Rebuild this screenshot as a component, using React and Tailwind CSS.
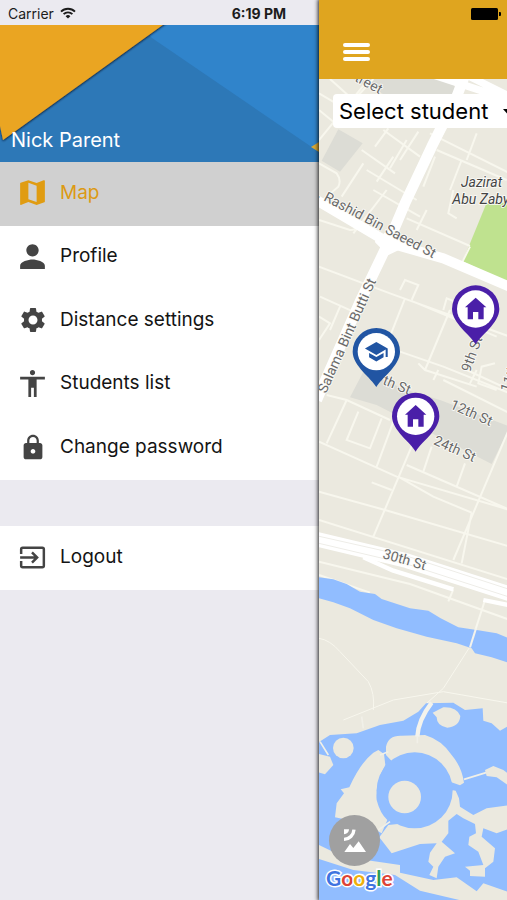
import React from "react";
import {
  IoMdMap,
  IoMdPerson,
  IoMdBody,
  IoMdLock,
  IoMdSchool,
} from "react-icons/io";
import { MdSettings } from "react-icons/md";

function ExitIcon({ size, className }) {
  return (
    <svg
      viewBox="0 0 32 32"
      width={size}
      height={size}
      className={className}
      fill="none"
      stroke="currentColor"
      strokeWidth="2.4"
      aria-hidden="true"
    >
      <path d="M5 12.500V8a1.500 1.500 0 0 1 1.500-1.500h19A1.500 1.500 0 0 1 27 8v16a1.500 1.500 0 0 1-1.500 1.500h-19A1.500 1.500 0 0 1 5 24v-4.500" />
      <path d="M4 16h16M15.500 11l5 5-5 5" />
    </svg>
  );
}

const menuItems = [
  { name: "Map", icon: IoMdMap },
  { name: "Profile", icon: IoMdPerson },
  { name: "Distance settings", icon: MdSettings, iconSize: 30 },
  { name: "Students list", icon: IoMdBody },
  { name: "Change password", icon: IoMdLock, iconSize: 30 },
];

const logo = [
  { letter: "G", color: "text-[#3f74e0]" },
  { letter: "o", color: "text-[#dd4436]" },
  { letter: "o", color: "text-[#eeb00c]" },
  { letter: "g", color: "text-[#3f74e0]" },
  { letter: "l", color: "text-[#2f9e55]" },
  { letter: "e", color: "text-[#dd4436]" },
];

function MenuItem({ item, active }) {
  const Icon = item.icon;
  return (
    <a
      href="#"
      aria-current={active ? "page" : undefined}
      className={`flex h-full items-center gap-[11px] px-4 pb-[2px] text-[19px] ${
        active ? "bg-[#d0d0d0] text-[#dc9a14]" : "bg-white text-[#141414]"
      }`}
    >
      <span className="flex w-[33px] justify-center">
        <Icon size={item.iconSize || 33} className={active ? "text-[#e09c12]" : "text-[#444444]"} />
      </span>
      <span>{item.name}</span>
    </a>
  );
}

function WifiIcon() {
  return (
    <svg viewBox="0 0 16 12" className="h-3 w-4" aria-hidden="true">
      <g fill="none" stroke="#1c1c1c" strokeWidth="1.9">
        <path d="M1 4.6a9.9 9.9 0 0 1 14 0" />
        <path d="M3.6 7.2a6.2 6.2 0 0 1 8.8 0" />
      </g>
      <path d="M8 11.6 5.6 9.2a3.4 3.4 0 0 1 4.8 0z" fill="#1c1c1c" />
    </svg>
  );
}

function ProfileBanner() {
  return (
    <div className="relative flex h-[137px] items-end overflow-hidden bg-[#2d78b7] px-[11px] pb-2">
      <svg
        viewBox="0 0 319 137"
        preserveAspectRatio="none"
        className="absolute inset-0 h-full w-full"
        aria-hidden="true"
      >
        <defs>
          <filter id="fold" x="-10%" y="-10%" width="120%" height="120%">
            <feDropShadow dx="0" dy="1" stdDeviation="1.2" floodColor="#06182a" floodOpacity="1" />
          </filter>
        </defs>
        <path d="M140 0H319V127L152 13z" fill="#3084cb" />
        <path d="M-6 -6H171L3 115L0 101V-6z" fill="#eaa524" filter="url(#fold)" />
        <path d="M311 122l8-5v10z" fill="#d9a936" />
      </svg>
      <span className="relative text-[20px] leading-7 text-white">Nick Parent</span>
    </div>
  );
}

function House() {
  return <path d="M0-34L32-5H24V31H8V9H-8V31H-24V-5H-32z" />;
}

function School() {
  return <IoMdSchool x="-39" y="-39" size={78} />;
}

function Pin({ x, y, color, icon: Icon }) {
  return (
    <g transform={`translate(${x} ${y})`} fill={color} color={color}>
      <path d="M0 106C-14 80-71 42-71 0a71 71 0 0 1 142 0C71 42 14 80 0 106z" />
      <circle r="56" fill="#fff" />
      <Icon />
    </g>
  );
}

function CityMap() {
  return (
    <svg
      viewBox="27 237 564 2463"
      preserveAspectRatio="xMinYMin slice"
      className="absolute inset-0 h-full w-full"
      role="img"
      aria-label="Street map"
    >
      <rect x="0" y="200" width="3000" height="2600" fill="#ebe9df" />

      {/* built-up areas and park */}
      <g fill="#dcdcd5">
        <path d="M130 237H425L445 290H235z" />
        <path d="M85 388L158 430L90 515L35 482z" />
        <path d="M160 1115L120 1192L200 1215L545 1392L600 1280L390 1200L290 1170z" />
      </g>
      <path d="M530 608H600V850L458 784z" fill="#bfe28f" />

      {/* side streets */}
      <g fill="none" stroke="#f8f7ee" strokeWidth="6">
        <path d="M27 420L170 245M27 280L120 335M60 237L130 300M90 345L190 237M27 330L70 365M235 385L195 440M220 390L330 470M325 395L270 480M290 420L240 505M155 450L255 520M250 470L200 545M160 490L95 590M170 510L320 600M360 400L600 520M410 380L375 445M500 400L470 480M380 450L590 540M375 470L340 560M455 480L420 570" />
        <path d="M27 490L80 520Q95 540 85 560L27 610M130 700L230 570M190 570L330 650M27 660L120 690Q150 690 140 660M290 655L480 738M320 690L350 630M430 570L415 640L440 655M480 740L455 790" />
        <path d="M27 800L240 880L600 1010M270 870L285 840L325 855L305 900M400 930L410 895L460 915M285 895L200 1110M420 930L345 1110M310 905L560 1010M30 890L130 935M27 950L60 970L27 1020M90 920L60 990M270 1055L400 1100L600 1180M325 1090L345 1110L500 1160M480 1150L500 1110M555 1090L515 1100L505 1150L560 1170" />
        <path d="M50 1185L110 1200L240 1260M110 1200L50 1330M145 1235L110 1320L180 1345L215 1255M250 1265L200 1400M27 1325L260 1430L600 1530M330 1280L190 1610M290 1395L600 1530M365 1340L340 1415M465 1390L440 1460M265 1430L300 1450L370 1490L485 1538M185 1447L245 1470M27 1475L225 1530L600 1640M27 1560L600 1740M600 1280L430 1680M485 1538L455 1690M470 1110L600 1170M400 1140L600 1240M385 1110L370 1140" />
        <path d="M27 1685L300 1752L600 1860M430 1768L415 1804M525 1800L480 1940M27 1725L180 1778" />
        <path d="M27 1915Q60 1920 90 1955L175 2045Q195 2080 190 2130M480 1940L400 2065L350 2110M100 2160L250 2100L400 2075L600 2110" strokeWidth="3" />
      </g>

      {/* main roads */}
      <g fill="none" stroke="#fff" strokeLinejoin="round">
        <path d="M10 595L235 728L400 775L610 865" strokeWidth="30" />
        <path d="M465 225L440 290L365 440L285 610L235 728L150 905L20 1200" strokeWidth="32" />
        <path d="M370 225L600 300M470 225L600 290" strokeWidth="22" />
        <path d="M10 1615L290 1682L610 1785" strokeWidth="44" />
        <path d="M160 1672L250 1712L430 1768M520 1800L610 1818" strokeWidth="13" />
        <path d="M200 725L235 695L280 738L235 760z" strokeWidth="10" fill="#fff" />
      </g>
      <path d="M10 1626L290 1692L610 1795M10 1605L290 1668L610 1772" fill="none" stroke="#eeede8" strokeWidth="3" />

      {/* river */}
      <path
        d="M20 1731L70 1738L110 1752L150 1775L195 1782L215 1797L300 1825L355 1832L392 1855L445 1882L500 1890L560 1900L600 1916V1990L545 1972L495 1960L485 1945L440 1930L350 1910L260 1885L190 1860L120 1825L70 1807L20 1793z"
        fill="#91bdff"
      />
      <path d="M498 1885L480 1942" stroke="#f4f3ec" strokeWidth="6" />

      {/* lake and its islands */}
      <g transform="translate(0 2100)">
        <path
          d="M20 130L60 105L140 100L210 75L280 62L325 35L348 10L430 8L465 30L518 25L520 62L545 70L570 92L600 75V610H20z"
          fill="#91bdff"
        />
        <g fill="#ebe9df">
          <path d="M20 160L60 170L70 195L45 223L20 215z" />
          <circle cx="100" cy="144" r="31" />
          <path d="M368 38L400 22Q440 20 451 48Q448 80 412 83Q380 78 380 52z" />
          <path d="M205 150L222 162L226 195Q195 250 200 300Q210 340 232 360L215 400L160 370L75 352L80 310L102 280L92 268L118 262Q150 190 190 158z" />
          <path d="M228 140Q235 105 275 107L345 105Q395 120 425 165Q455 200 462 248L450 256L420 245L380 200L270 190L245 183L228 165z" />
          <path d="M425 270L437 272L447 295L450 320L490 345L530 325L600 315V385L560 400L520 385L515 410L555 445L550 485L525 505V530L480 528V512L465 500L520 495L505 455L475 435L478 410L498 400L495 372L460 355L440 342L415 362L415 400L395 425L435 460L405 470L385 500L380 535L358 525L370 500L355 485L360 458L380 430L330 432L300 442L245 460L208 412L235 375L285 370L395 340z" />
          <path d="M525 210L550 198L580 210L600 225V260L560 232L530 228z" />
          <path d="M20 432L100 470L270 495L270 518L370 540L440 532L500 574L520 550L600 578V610H490L330 572L255 525L130 510L20 475z" />
        </g>
        <circle cx="314" cy="271" r="114" fill="#91bdff" />
        <circle cx="284" cy="291" r="49" fill="#ebe9df" />
        <path
          d="M365 8Q325 60 322 110"
          fill="none"
          stroke="#f4f3ec"
          strokeWidth="13"
        />
        <path
          d="M30 125L55 165M462 238L528 218M210 165L235 155M205 390L240 365M155 50L160 85M322 110V130"
          stroke="#f1f0e8"
          strokeWidth="5"
        />
      </g>

      {/* street names */}
      <g
        fontFamily="Roboto, sans-serif"
        fontSize="42"
        fill="#6a6a6a"
        stroke="#fbfbf8"
        strokeWidth="5"
        paintOrder="stroke"
      >
        <text transform="translate(132 242) rotate(28)">treet</text>
        <text transform="translate(20 590) rotate(28)">. Rashid Bin Saeed St</text>
        <text transform="translate(48 1182) rotate(-66)">Salama Bint Butti St</text>
        <text transform="translate(216 1152) rotate(22)">th St</text>
        <text transform="translate(418 1224) rotate(24)">12th St</text>
        <text transform="translate(368 1332) rotate(24)">24th St</text>
        <text transform="translate(216 1674) rotate(16)">30th St</text>
        <text transform="translate(480 1118) rotate(-70)">9th St</text>
        <text transform="translate(597 1178) rotate(-70)">11th St</text>
        <g fontStyle="italic" fill="#444">
          <text x="453" y="560">Jazirat</text>
          <text x="427" y="612">Abu Zaby</text>
        </g>
      </g>

      <Pin x={497} y={927} color="#4a1fa8" icon={House} />
      <Pin x={199} y={1055} color="#2155a3" icon={School} />
      <Pin x={317} y={1249} color="#4a1fa8" icon={House} />
    </svg>
  );
}

function Drawer() {
  return (
    <aside className="flex w-[319px] shrink-0 flex-col bg-[#ebeaf0]">
      <div className="flex h-[25px] items-center justify-between pt-[1px] pr-[33px] pl-2 text-[14px] text-[#1c1c1c]">
        <div className="flex items-center gap-[6px]">
          <span>Carrier</span>
          <WifiIcon />
        </div>
        <time className="font-bold">6:19 PM</time>
      </div>
      <ProfileBanner />
      <nav>
        <ul className="grid h-[318px] grid-rows-5">
          {menuItems.map((item) => (
            <li key={item.name}>
              <MenuItem item={item} active={item.name === "Map"} />
            </li>
          ))}
        </ul>
        <div className="mt-[46px] h-16">
          <MenuItem item={{ name: "Logout", icon: ExitIcon }} />
        </div>
      </nav>
    </aside>
  );
}

export default function App() {
  return (
    <div className="flex min-h-screen overflow-hidden font-['Inter',sans-serif]">
      <Drawer />
      <main className="relative flex min-w-0 flex-1 flex-col shadow-[0_0_4px_1px_rgba(0,0,0,0.85)]">
        <header className="flex h-[79px] flex-col justify-between bg-[#dfa51f] pt-2 pb-[18px] pl-6">
          <svg viewBox="0 0 30 12" className="mr-[6px] h-3 w-[30px] self-end" aria-label="Battery full">
            <rect width="27" height="12" rx="1.5" />
            <path d="M28 4h1a1 1 0 0 1 1 1v2a1 1 0 0 1-1 1h-1z" />
          </svg>
          <button type="button" aria-label="Toggle menu" className="flex w-[27px] flex-col gap-[3px]">
            <span className="h-1 w-full rounded-sm bg-white" />
            <span className="h-1 w-full rounded-sm bg-white" />
            <span className="h-1 w-full rounded-sm bg-white" />
          </button>
        </header>

        <section className="relative flex flex-1 flex-col justify-between overflow-hidden pt-[15px] pb-[10px]">
          <CityMap />
          <div className="relative ml-[14px] w-[220px]">
            <select
              aria-label="Select student"
              className="h-[34px] w-full appearance-none rounded bg-white pl-[6px] text-[22px] text-black"
            >
              <option>Select student</option>
            </select>
            <svg viewBox="0 0 14 8" className="absolute top-[15px] left-[170px] h-2 w-[14px]" aria-hidden="true">
              <path d="M0 0h14L7 8z" />
            </svg>
          </div>

          <div className="relative flex flex-col items-start pl-[7px]">
            <button
              type="button"
              aria-label="Map type"
              className="ml-[3px] flex size-[51px] items-center justify-center rounded-full bg-[#a0a0a0]"
            >
              <svg viewBox="0 0 66 70" className="h-6 w-[22px]" aria-hidden="true">
                <path d="M1 68L18 44L28 56L44 36L66 68z" fill="#fff" />
                <path d="M0 0H15A15 15 0 0 1 0 15z" fill="#fff" />
                <path d="M30 1A31 31 0 0 1 0 30" fill="none" stroke="#fff" strokeWidth="10" />
              </svg>
            </button>
            <span className="font-['Lato',sans-serif] text-[21px] leading-6 font-bold [-webkit-text-stroke:3px_white] [paint-order:stroke_fill]">
              {logo.map((part, i) => (
                <span key={i} className={part.color}>
                  {part.letter}
                </span>
              ))}
            </span>
          </div>
        </section>
      </main>
    </div>
  );
}
